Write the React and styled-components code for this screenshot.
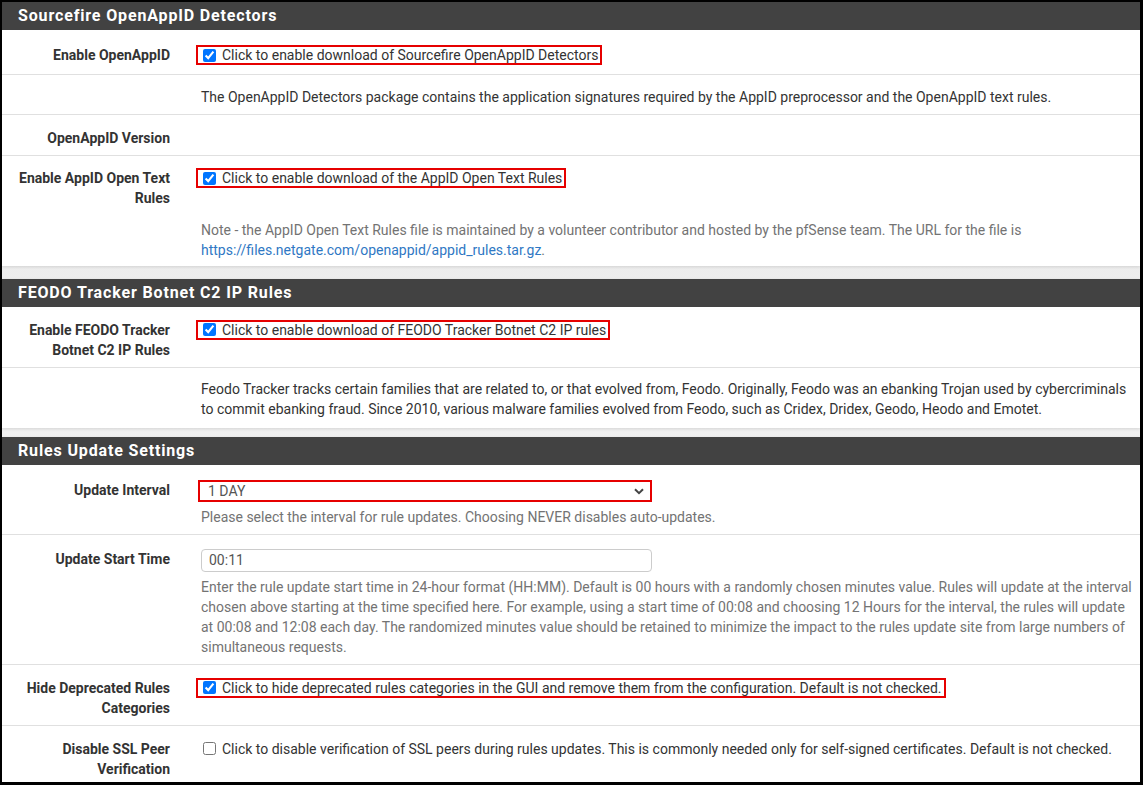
import React from "react";
import styled, { createGlobalStyle } from "styled-components";

const GlobalStyle = createGlobalStyle`
  html, body {
    margin: 0;
    padding: 0;
    background: #fff;
  }
  * {
    box-sizing: border-box;
  }
`;

const Frame = styled.div`
  width: 1143px;
  height: 785px;
  overflow: hidden;
  border-style: solid;
  border-color: #000;
  border-width: 2px 3px 3px 2px;
  background: linear-gradient(#e9e9e9, #f6f6f6);
  font-family: Roboto, "Liberation Sans", Arial, sans-serif;
  font-size: 14px;
  line-height: 20px;
  color: #333;
`;

const Panel = styled.section`
  background: #fff;
  margin-bottom: ${p => p.gap || 10}px;
  box-shadow: 0 1px 3px rgba(0, 0, 0, 0.12);
`;

const Heading = styled.h2`
  margin: 0;
  height: 28px;
  display: flex;
  align-items: center;
  padding: 0 16px;
  background: #424242;
  color: #fff;
  font-size: 16px;
  font-weight: 700;
  letter-spacing: 0.85px;
`;

const Row = styled.div`
  display: grid;
  grid-template-columns: 168px 1fr;
  column-gap: 31px;
  min-height: ${p => p.min || 42}px;
  padding: ${p => p.top || 13}px 6px ${p => p.bottom || 7}px 0;
  border-top: ${p => (p.first ? "none" : "1px solid #e0e0e0")};
`;

const Label = styled.div`
  text-align: right;
  font-weight: 700;
  color: #333;
  padding-top: ${p => p.offset || 0}px;
`;

const Value = styled.div`
  min-width: 0;
`;

const Highlight = styled.label`
  display: inline-flex;
  align-items: center;
  gap: 6px;
  margin-left: -5px;
  padding: 0 2px 0 5px;
  border: 2px solid #e60000;
  line-height: 16px;
  color: #333;
`;

const CheckLine = styled.label`
  display: inline-flex;
  align-items: center;
  gap: 6px;
  margin-left: 2px;
  color: #333;
`;

const Box = styled.input.attrs({ type: "checkbox" })`
  width: 13px;
  height: 13px;
  margin: 0;
  accent-color: #0075ff;
`;

const Description = styled.p`
  margin: 0;
  color: #333;
`;

const Help = styled.p`
  margin: ${p => p.space || 5}px 0 0;
  color: #737373;
`;

const Link = styled.a`
  color: #2f78c4;
  text-decoration: none;
`;

const SelectWrap = styled.div`
  position: relative;
  width: 454px;
  margin: 2px 0 0 -3px;
`;

const Select = styled.select`
  display: block;
  width: 100%;
  height: 22px;
  padding: 0 8px;
  border: 2px solid #e60000;
  border-radius: 0;
  background: #fff;
  appearance: none;
  font-family: inherit;
  font-size: 14px;
  color: #555;
  outline: none;
`;

const Chevron = styled.svg`
  position: absolute;
  right: 8px;
  top: 8px;
  pointer-events: none;
`;

const TimeInput = styled.input`
  display: block;
  width: 451px;
  height: 23px;
  margin-top: 1px;
  padding: 0 7px;
  border: 1px solid #ccc;
  border-radius: 4px;
  font-family: inherit;
  font-size: 14px;
  color: #555;
`;

const Check = ({ children, checked, highlight }) => {
  const Wrap = highlight ? Highlight : CheckLine;
  return (
    <Wrap>
      <Box defaultChecked={checked} />
      <span>{children}</span>
    </Wrap>
  );
};

export default function App() {
  return (
    <>
      <GlobalStyle />
      <Frame>
        <Panel gap={13}>
          <Heading>Sourcefire OpenAppID Detectors</Heading>
          <Row first top={15} min={44}>
            <Label>Enable OpenAppID</Label>
            <Value>
              <Check checked highlight>
                Click to enable download of Sourcefire OpenAppID Detectors
              </Check>
            </Value>
          </Row>
          <Row top={12} min={40}>
            <Label />
            <Value>
              <Description>
                The OpenAppID Detectors package contains the application
                signatures required by the AppID preprocessor and the
                OpenAppID text rules.
              </Description>
            </Value>
          </Row>
          <Row min={41}>
            <Label>OpenAppID Version</Label>
            <Value />
          </Row>
          <Row top={12} bottom={6}>
            <Label>Enable AppID Open Text Rules</Label>
            <Value>
              <Check checked highlight>
                Click to enable download of the AppID Open Text Rules
              </Check>
              <Help space={30}>
                Note - the AppID Open Text Rules file is maintained by a
                volunteer contributor and hosted by the pfSense team. The URL
                for the file is{" "}
                <Link href="#">
                  https://files.netgate.com/openappid/appid_rules.tar.gz
                </Link>
                .
              </Help>
            </Value>
          </Row>
        </Panel>

        <Panel gap={9}>
          <Heading>FEODO Tracker Botnet C2 IP Rules</Heading>
          <Row first>
            <Label>Enable FEODO Tracker Botnet C2 IP Rules</Label>
            <Value>
              <Check checked highlight>
                Click to enable download of FEODO Tracker Botnet C2 IP rules
              </Check>
            </Value>
          </Row>
          <Row top={11} bottom={9}>
            <Label />
            <Value>
              <Description>
                Feodo Tracker tracks certain families that are related to, or
                that evolved from, Feodo. Originally, Feodo was an ebanking
                Trojan used by cybercriminals to commit ebanking fraud. Since
                2010, various malware families evolved from Feodo, such as
                Cridex, Dridex, Geodo, Heodo and Emotet.
              </Description>
            </Value>
          </Row>
        </Panel>

        <Panel>
          <Heading>Rules Update Settings</Heading>
          <Row first>
            <Label offset={2}>Update Interval</Label>
            <Value>
              <SelectWrap>
                <Select defaultValue="1d">
                  <option value="never">NEVER</option>
                  <option value="1d">1 DAY</option>
                </Select>
                <Chevron width="10" height="7" viewBox="0 0 10 7">
                  <path
                    d="M1 1.2 L5 5.2 L9 1.2"
                    fill="none"
                    stroke="#444"
                    strokeWidth="2"
                  />
                </Chevron>
              </SelectWrap>
              <Help>
                Please select the interval for rule updates. Choosing NEVER
                disables auto-updates.
              </Help>
            </Value>
          </Row>
          <Row>
            <Label offset={1}>Update Start Time</Label>
            <Value>
              <TimeInput defaultValue="00:11" />
              <Help>
                Enter the rule update start time in 24-hour format (HH:MM).
                Default is 00 hours with a randomly chosen minutes value. Rules
                will update at the interval chosen above starting at the time
                specified here. For example, using a start time of 00:08 and
                choosing 12 Hours for the interval, the rules will update at
                00:08 and 12:08 each day. The randomized minutes value should
                be retained to minimize the impact to the rules update site
                from large numbers of simultaneous requests.
              </Help>
            </Value>
          </Row>
          <Row>
            <Label>Hide Deprecated Rules Categories</Label>
            <Value>
              <Check checked highlight>
                Click to hide deprecated rules categories in the GUI and remove
                them from the configuration. Default is not checked.
              </Check>
            </Value>
          </Row>
          <Row>
            <Label>Disable SSL Peer Verification</Label>
            <Value>
              <Check>
                Click to disable verification of SSL peers during rules
                updates. This is commonly needed only for self-signed
                certificates. Default is not checked.
              </Check>
            </Value>
          </Row>
        </Panel>
      </Frame>
    </>
  );
}
